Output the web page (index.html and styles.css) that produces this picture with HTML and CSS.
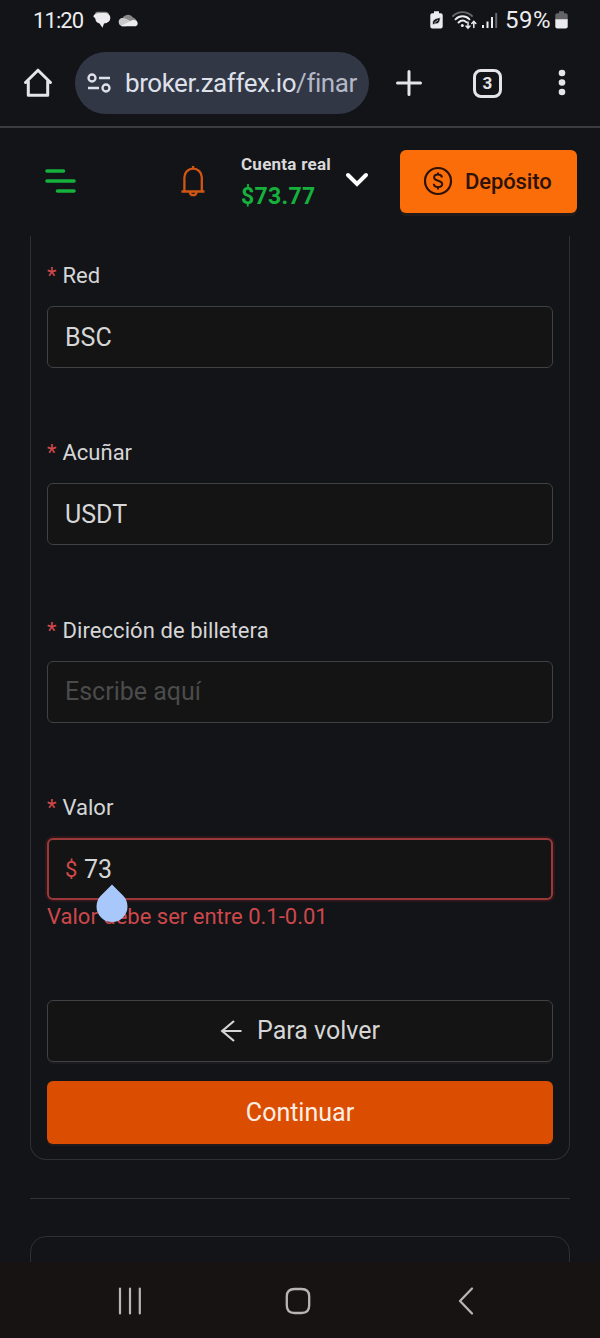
FILE: index.html
```html
<!DOCTYPE html>
<html lang="es">
<head>
<meta charset="utf-8">
<title>broker.zaffex.io</title>
<link rel="stylesheet" href="styles.css">
</head>
<body>
<div class="status">
  <span class="clock">11:20</span>
  <svg class="chat" width="18" height="18" viewBox="0 0 18 18"><path d="M4 .8h8c2.500 0 3.500 1 4 2H2C2.200 1.500 3 .8 4 .8z" fill="#8b8b8d"/><path d="M.3 5.500C.8 3.300 3 2 6 2h6c3.500 0 5.300 2.200 5.300 4.800 0 3.200-2.300 5.400-6.300 5.700L9.500 16.800 6.500 12.500C3.700 11.800 2.500 10.300 2.300 7.500z" fill="#ececee"/></svg>
  <svg class="cloud" width="20" height="14" viewBox="0 0 20 14"><path d="M4 7a6 6 0 0 1 11-2.500c2 .5 4 2.500 4 5H2z" fill="#88888a"/><path d="M4.500 13.300A4.300 4.300 0 0 1 3.500 5c1.500-.3 3 0 4.500.8L17 10l-9 3.300z" fill="#c8c8ca"/><path d="M3 12.800 14 7.200c3-1 5.700.6 5.700 3.200 0 1.800-1.300 2.900-3.200 2.900H5c-.8 0-1.500-.1-2-.5z" fill="#ececee"/></svg>
  <div class="indicators">
    <svg width="13" height="18" viewBox="0 0 13 18"><path d="M4 .3h5v2h1.800A1.900 1.900 0 0 1 12.700 4v11.500a2 2 0 0 1-2 2H2.300a2 2 0 0 1-2-2V4a1.900 1.900 0 0 1 1.900-1.700H4z" fill="#ececee"/><path d="M2.500 13c0-4 1.500-5.500 7.800-6.500-.2 4.500-2 7.200-5.600 6.200l-1 1zM4.500 11.800 8 9" fill="#17181b" stroke="#ececee" stroke-width=".7"/></svg>
    <svg class="wifi" width="25" height="19" viewBox="0 0 25 19" fill="none" stroke="#ececee" stroke-width="1.900" stroke-linecap="round"><path d="M1 5C6.500-.2 14.500-.2 20 5" stroke="#68686b"/><path d="M3.500 8.300c4-4 10-4 14 0M6.500 11.500c2.500-2.400 5.500-2.400 8-.3"/><circle cx="10.300" cy="14.600" r="1.500" fill="#ececee" stroke="none"/><path d="M16 11v6M14 15l2 2.200 2-2.200M21.800 16.500v-6M19.800 12.500l2-2.200 2 2.200" stroke-width="1.500"/></svg>
    <svg class="signal" width="16" height="17" viewBox="0 0 16 17"><path d="M0 13h2v3H0zM4.500 9.500h2V16h-2zM9 5h2v11H9z" fill="#ececee"/><path d="M13.200 1h2v15h-2z" fill="#68686b"/></svg>
    <span class="percent">59%</span>
    <svg class="battery" width="13" height="18" viewBox="0 0 13 18"><path d="M4 .3h5v2h1.800A1.900 1.900 0 0 1 12.700 4v5H.3V4a1.900 1.900 0 0 1 1.900-1.700H4z" fill="#646468"/><path d="M.3 8.300h12.400v7.200a2 2 0 0 1-2 2H2.300a2 2 0 0 1-2-2z" fill="#ececee"/></svg>
  </div>
</div>
<div class="toolbar">
  <svg class="home" width="30" height="30" viewBox="0 0 30 30" fill="none" stroke="#e4e4e9" stroke-width="3" stroke-linejoin="round" stroke-linecap="round"><path d="M2.500 14.500 15 2.200l12.500 12.300M5.300 13v14.200h19.400V13"/></svg>
  <div class="url">
    <svg width="24" height="20" viewBox="0 0 24 20" fill="none" stroke="#dfe1ea" stroke-width="2.300"><circle cx="5" cy="5" r="3.500"/><circle cx="19" cy="15" r="3.500"/><path d="M12 5h11M1 15h11"/></svg>
    <span class="address">broker.zaffex.io<span class="path">/finar</span></span>
  </div>
  <svg class="plus" width="26" height="26" viewBox="0 0 26 26" stroke="#e4e4e9" stroke-width="3" stroke-linecap="round"><path d="M13 1.500v23M1.500 13h23"/></svg>
  <div class="tabs">3</div>
  <svg class="dots" width="8" height="28" viewBox="0 0 8 28" fill="#e4e4e9"><circle cx="4" cy="4" r="3.300"/><circle cx="4" cy="13.500" r="3.300"/><circle cx="4" cy="23" r="3.300"/></svg>
</div>
<header class="header">
  <svg class="menu" width="32" height="26" viewBox="0 0 32 26" stroke="#16b13d" stroke-width="3.600" stroke-linecap="round"><path d="M2 3h16.500M2 13h27M12.500 23H29"/></svg>
  <svg class="bell" width="24" height="32" viewBox="0 0 24 32" fill="none" stroke="#d15513" stroke-width="2.300"><path d="M.5 26.500h23M3.400 26.500V12.300a8.700 8.700 0 0 1 17.400 0v14.200M12.100 4V1M8.800 26.800c.4 4.500 6.400 4.500 6.800 0"/></svg>
  <div class="account"><div class="kind">Cuenta real</div><div class="balance">$73.77</div></div>
  <svg class="chevron" width="24" height="16" viewBox="0 0 24 16" fill="none" stroke="#fff" stroke-width="4" stroke-linecap="round"><path d="m3 3 9 9 9-9"/></svg>
  <button class="deposit">
    <svg width="30" height="30" viewBox="0 0 30 30" fill="none" stroke="#2c1208" stroke-width="2.200"><circle cx="15" cy="15" r="13"/><path d="M19 11.500c-.3-1.900-1.800-2.900-4-2.900s-3.900 1-3.900 2.900c0 4.300 8.100 2.200 8.100 6.500 0 2-1.700 3.100-4.100 3.100-2.500 0-4.200-1.100-4.300-3.300M15 6.500v2.500M15 21v2.500" stroke-width="2"/></svg>
    <span>Depósito</span>
  </button>
</header>
<main class="main">
  <section class="card">
    <div class="field"><div class="label"><i>*</i>Red</div><div class="input">BSC</div></div>
    <div class="field"><div class="label"><i>*</i>Acuñar</div><div class="input">USDT</div></div>
    <div class="field"><div class="label"><i>*</i><span class="long">Dirección de billetera</span></div><div class="input placeholder">Escribe aquí</div></div>
    <div class="field last"><div class="label"><i>*</i>Valor</div><div class="input invalid"><span class="prefix">$</span>73
      <svg class="handle" width="32" height="39" viewBox="0 0 32 39"><path d="M16 .5 27 11.500A15.500 15.500 0 1 1 5 11.500z" fill="#a8c7fa"/></svg></div>
      <div class="error">Valor debe ser entre 0.1-0.01</div></div>
    <button class="btn back"><svg width="22" height="22" viewBox="0 0 22 22" fill="none" stroke="#d6d6d6" stroke-width="2.200"><path d="M1.500 11H21.500M14 1 2.200 11 14 21"/></svg><span>Para volver</span></button>
    <button class="btn next"><span>Continuar</span></button>
  </section>
  <hr class="rule">
  <section class="card following"></section>
</main>
<nav class="nav">
  <svg class="recents" width="24" height="28" viewBox="0 0 24 28" stroke="#b9b5b3" stroke-width="2.200" stroke-linecap="round"><path d="M2 1.500v25M12 1.500v25M21.800 1.500v25"/></svg>
  <svg class="circle" width="26" height="30" viewBox="0 0 26 30" fill="none" stroke="#b9b5b3" stroke-width="2.300"><path d="M9.500 3h7Q24.200 3 24.200 10.500v9q0 7.500-7.700 7.500h-7Q1.800 27 1.800 19.500v-9Q1.800 3 9.500 3z"/></svg>
  <svg class="return" width="16" height="30" viewBox="0 0 16 30" fill="none" stroke="#b9b5b3" stroke-width="2.300" stroke-linecap="round" stroke-linejoin="round"><path d="M14 2.500 2 15l12 12.500"/></svg>
</nav>
</body>
</html>
```

FILE: styles.css
```css
* { box-sizing: border-box; }
body {
  margin: 0;
  width: 600px;
  height: 1338px;
  display: flex;
  flex-direction: column;
  overflow: hidden;
  background: #131418;
  color: #d6d6d7;
  font-family: Roboto, sans-serif;
}
svg { display: block; flex: none; }
button { border: 0; font: inherit; display: flex; align-items: center; }
span { white-space: nowrap; }

.status { height: 40px; flex: none; display: flex; align-items: center; padding: 0 32px 0 33px; color: #ececee; font-size: 22px; }
.clock { width: 60px; font-size: 22px; letter-spacing: -.9px; }
.cloud { margin-left: 7px; margin-top: -1px; }
.indicators { margin-left: auto; display: flex; align-items: center; }
.wifi { margin-left: 9px; }
.signal { margin-left: 5px; margin-top: 1px; }
.percent { margin-left: 7px; width: 46px; font-size: 24px; letter-spacing: .5px; }
.battery { margin-left: 4px; }

.toolbar { height: 88px; flex: none; display: flex; align-items: center; padding: 0 34px 0 23px; border-bottom: 2px solid #3b3b40; }
.url { width: 294px; height: 62px; margin-left: 22px; padding-left: 12px; display: flex; align-items: center; background: #323746; border-radius: 31px; }
.address { margin-left: 14px; color: #dfe1ea; font-size: 26px; letter-spacing: -.45px; }
.path { color: #b3b7c6; }
.plus { margin-left: 27px; }
.tabs { width: 29px; height: 29px; margin-left: 51px; border: 3px solid #e4e4e9; border-radius: 8px; display: grid; place-items: center; font: bold 17px Roboto, sans-serif; color: #e4e4e9; }
.dots { margin-left: auto; }

.header { height: 108px; flex: none; display: flex; align-items: center; padding: 0 23px 2px 45px; }
.menu { margin-bottom: 1px; }
.bell { margin-left: 104px; }
.account { width: 91px; margin-left: 36px; margin-top: 3px; font-weight: 700; white-space: nowrap; }
.kind { font-size: 17px; letter-spacing: .25px; line-height: 20px; color: #d9d9da; }
.balance { font-size: 23px; letter-spacing: .3px; line-height: 30px; margin-top: 8px; color: #16b13d; }
.chevron { margin-left: 13px; margin-top: -2px; }
.deposit { width: 177px; height: 63px; margin-left: auto; padding: 0 0 1px 23px; gap: 12px; border-radius: 6px; background: #fb6d09; box-shadow: 0 3px 0 #211c1b; color: #2c1208; font-size: 22px; font-weight: 500; }
.deposit span { padding-top: 2px; letter-spacing: -.1px; }

.main { height: 1026px; flex: none; overflow: hidden; padding: 0 30px; }
.card { height: 924px; padding: 24px 16px 0; border: 1px solid #2f3034; border-top: 0; border-radius: 0 0 16px 16px; }
.field { height: 177.400px; }
.label { height: 32px; display: flex; align-items: center; font-size: 22px; line-height: 32px; }
.label i { width: 15.500px; color: #d2494b; font-style: normal; font-size: 22px; }
.long { letter-spacing: .07px; }
.input { position: relative; height: 62px; margin-top: 14px; padding-left: 17px; display: flex; align-items: center; background: #141414; border: 1px solid #404144; border-radius: 6px; font-size: 25px; }
.placeholder { color: #4b4b4b; }
.invalid { border: 2px solid #9a383a; box-shadow: 0 0 0 2px #2c161a; padding-left: 16px; }
.prefix { width: 19px; color: #d2494b; font-size: 22px; }
.handle { position: absolute; left: 47px; top: 44px; z-index: 2; }
.error { color: #cd484b; font-size: 22px; line-height: 34px; }
.last { height: 207.500px; }
.btn { width: 100%; height: 62.500px; justify-content: center; border-radius: 6px; font-size: 25px; }
.back { gap: 15px; background: #141414; border: 1px solid #404144; box-shadow: 0 2px 0 #1c1c1f; color: #d6d6d6; }
.next { margin-top: 19px; background: #db4e02; box-shadow: 0 2px 0 #211c1b; color: #fbeee4; }
.rule { margin: 38px 0 37px; border: 0; border-top: 1px solid #323337; }
.following { border-top: 1px solid #2f3034; border-radius: 16px 16px 0 0; }

.nav { height: 76px; flex: none; display: flex; align-items: center; padding-left: 118px; padding-top: 2px; background: #171312; }
.circle { margin-left: 143px; }
.return { margin-left: 147px; }
```
